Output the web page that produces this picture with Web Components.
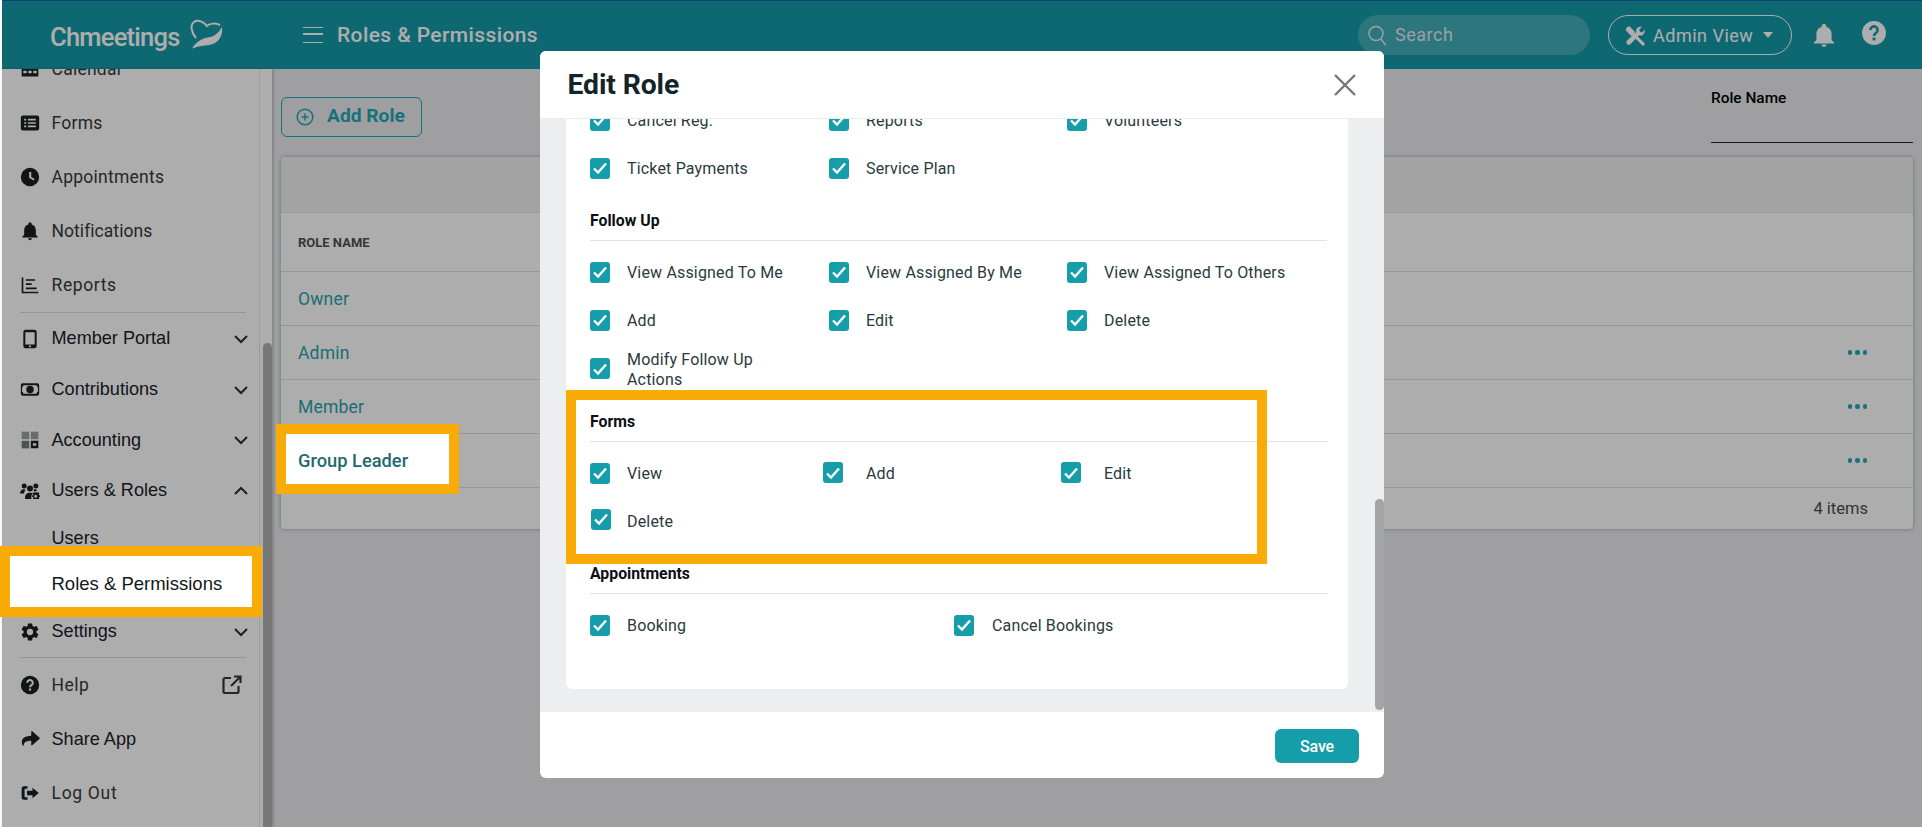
<!DOCTYPE html>
<html lang="en"><head><meta charset="utf-8"><title>Roles &amp; Permissions</title>
<style>
html,body{margin:0;padding:0;height:100%;overflow:hidden;background:#fff;font-family:Roboto,"Liberation Sans",sans-serif}
</style></head>
<body>
<app-page>
  <top-bar slot="top">Roles &amp; Permissions</top-bar>
  <side-nav slot="nav">
    <nav-item h="54" icon="calendar" soft>Calendar</nav-item>
    <nav-item h="54" icon="forms" soft>Forms</nav-item>
    <nav-item h="54" icon="clock" soft>Appointments</nav-item>
    <nav-item h="54" icon="bell" soft style="letter-spacing:.05px">Notifications</nav-item>
    <nav-item h="54" icon="reports" soft style="letter-spacing:.6px">Reports</nav-item>
    <nav-rule></nav-rule>
    <nav-item h="51" icon="mobile" arrow="down">Member Portal</nav-item>
    <nav-item h="51" icon="money" arrow="down">Contributions</nav-item>
    <nav-item h="50" icon="accounting" arrow="down">Accounting</nav-item>
    <nav-item h="51" icon="users" arrow="up">Users &amp; Roles</nav-item>
    <nav-item h="44" sub>Users</nav-item>
    <nav-item h="46" sub></nav-item>
    <nav-item h="51" icon="gear" arrow="down">Settings</nav-item>
    <nav-rule></nav-rule>
    <nav-item h="54" icon="help" ext soft style="letter-spacing:.5px">Help</nav-item>
    <nav-item h="54" icon="share">Share App</nav-item>
    <nav-item h="54" icon="logout" soft style="letter-spacing:.7px">Log Out</nav-item>
  </side-nav>
  <roles-view slot="main">
    <role-row>Owner</role-row>
    <role-row dots>Admin</role-row>
    <role-row dots>Member</role-row>
    <role-row dots></role-row>
  </roles-view>
  <edit-modal slot="modal">
    <perm-group notitle>
      <perm-check>Cancel Reg.</perm-check><perm-check>Reports</perm-check><perm-check>Volunteers</perm-check>
      <perm-check>Ticket Payments</perm-check><perm-check>Service Plan</perm-check>
    </perm-group>
    <perm-group>
      <span slot="title">Follow Up</span>
      <perm-check>View Assigned To Me</perm-check><perm-check>View Assigned By Me</perm-check><perm-check>View Assigned To Others</perm-check>
      <perm-check>Add</perm-check><perm-check>Edit</perm-check><perm-check>Delete</perm-check>
      <perm-check style="height:49px">Modify Follow Up Actions</perm-check>
    </perm-group>
    <perm-group>
      <span slot="title">Forms</span>
      <perm-check>View</perm-check><perm-check style="--nx:-6px;--ny:1px">Add</perm-check><perm-check style="--nx:-6px;--ny:1px">Edit</perm-check>
      <perm-check style="--nx:1px;--ny:4px">Delete</perm-check>
    </perm-group>
    <perm-group cols="364px 1fr">
      <span slot="title">Appointments</span>
      <perm-check>Booking</perm-check><perm-check style="--lg:18px">Cancel Bookings</perm-check>
    </perm-group>
  </edit-modal>
  <call-out slot="marks" style="left:0;top:546px;width:262px;height:71px;padding:4px 0 0 41.5px;font:18.500px 'Liberation Sans',sans-serif;color:#121820" fill>Roles &amp; Permissions</call-out>
  <call-out slot="marks" style="left:276px;top:424px;width:183px;height:70px;padding:3px 0 0 12px;font:500 18.300px Roboto,sans-serif;color:#1f6a70" fill>Group Leader</call-out>
  <call-out slot="marks" style="left:566px;top:390px;width:701px;height:174px"></call-out>
</app-page>
<script>
const ICON = {
  calendar:'<path d="M3 3h18a1 1 0 0 1 1 1v17H2V4a1 1 0 0 1 1-1zM4 9v3h4V9zm6 0v3h4V9zm6 0v3h4V9zM4 14v3h4v-3zm6 0v3h4v-3zm6 0v3h4v-3z" fill-rule="evenodd"/>',
  forms:'<path fill-rule="evenodd" d="M3.500 3h17A2.500 2.500 0 0 1 23 5.500v13a2.500 2.500 0 0 1-2.500 2.500h-17A2.500 2.500 0 0 1 1 18.500v-13A2.500 2.500 0 0 1 3.500 3zM5 7v2h2.500V7zm4.500 0v2H19V7zM5 11v2h2.500v-2zm4.500 0v2H19v-2zM5 15v2h2.500v-2zm4.500 0v2H19v-2z"/>',
  clock:'<path fill-rule="evenodd" d="M12 1a11 11 0 1 1 0 22 11 11 0 0 1 0-22zm-1 5v7l5.500 3.200 1-1.700L13.500 12V6z"/>',
  bell:'<path d="M12 23c1.300 0 2.300-1 2.300-2.200H9.700C9.700 22 10.700 23 12 23zm7-6.500v-5.300c0-3.400-1.900-6.200-5-6.900v-.8C14 2.400 13.100 1.500 12 1.500s-2 .9-2 2v.8c-3.100.7-5 3.500-5 6.900v5.300L2.700 19v.8h18.600V19z"/>',
  reports:'<path d="M2 3h2v17h18v2H2z"/><path d="M7 5h11v2H7zM7 10h7v2H7zM7 15h13v2H7z"/>',
  mobile:'<path fill-rule="evenodd" d="M7 1h10a3 3 0 0 1 3 3v16a3 3 0 0 1-3 3H7a3 3 0 0 1-3-3V4a3 3 0 0 1 3-3zm-.6 3v14.500h11.200V4zM12 19.500a1.300 1.300 0 1 0 0 2.600 1.300 1.300 0 0 0 0-2.600z"/>',
  money:'<path fill-rule="evenodd" d="M3 4.500h18a2.500 2.500 0 0 1 2 2v11a2.500 2.500 0 0 1-2 2H3a2.500 2.500 0 0 1-2-2v-11a2.500 2.500 0 0 1 2-2zm1 2.500c0 1.300-.8 2-1.500 2.200v5.600c.7.200 1.500.9 1.500 2.200h16c0-1.300.8-2 1.500-2.200V9.200C20.800 9 20 8.300 20 7zm8 .5a4.500 4.500 0 1 1 0 9 4.500 4.500 0 0 1 0-9z"/>',
  accounting:'<g opacity=".42"><rect x="2" y="2" width="9" height="9"/><rect x="13" y="2" width="9" height="9"/></g><rect x="2" y="13" width="9" height="9" opacity=".6"/><path fill-rule="evenodd" d="M13 13h9v9h-9zm2.500 3v3h4v-3z"/>',
  users:'<circle cx="5" cy="6" r="3"/><circle cx="19" cy="6" r="3"/><circle cx="12" cy="9" r="3.600"/><path d="M0 15c0-3 2-5 4.500-5 1 0 1.700.3 2.300.8-1.200 1-2 2.500-2 4.200zM6 20c0-3.700 2.500-6 6-6 1.500 0 2.800.4 3.700 1.100-1 .6-1.800 1.400-2 2.900-.4 1-.3 1.900.3 3.500H6zM18 10c1 0 2 .3 2.700 1l-3.600 1.800-.9-2.300c.5-.3 1.100-.5 1.800-.5z"/><path fill-rule="evenodd" d="M19 14.500l.4 1.400 1.200.3 1.200-.6 1 1-.6 1.200.3 1.200 1.400.4v1.300l-1.400.4-.3 1.200.6 1.200H15l.6-1.200-.3-1.200-1.400-.4v-1.300l1.400-.4.3-1.200-.6-1.200 1-1 1.200.6 1.200-.3.4-1.400zm-.6 4a1.800 1.800 0 1 0 0 3.600 1.800 1.800 0 0 0 0-3.600z" transform="translate(.4 -2)"/>',
  gear:'<path d="M19.700 13c.05-.33.07-.66.07-1s-.02-.67-.08-1l2.170-1.700a.52.520 0 0 0 .13-.66l-2.060-3.560a.52.520 0 0 0-.63-.23l-2.560 1.030a7.500 7.500 0 0 0-1.740-1L14.620 2.100a.52.520 0 0 0-.51-.44H9.990a.5.500 0 0 0-.5.440L9.100 4.830c-.63.26-1.210.61-1.740 1L4.800 4.800a.52.520 0 0 0-.63.230L2.100 8.590c-.13.230-.09.500.13.660L4.400 11c-.05.330-.1.680-.1 1s.02.680.08 1l-2.180 1.700a.52.520 0 0 0-.13.660l2.060 3.560c.13.240.4.310.63.230l2.560-1.030c.54.410 1.100.750 1.740 1l.39 2.720c.05.260.26.440.51.440h4.120c.26 0 .47-.18.500-.440l.39-2.720a7.500 7.500 0 0 0 1.740-1l2.560 1.030c.24.090.500 0 .630-.23l2.060-3.560c.13-.23.08-.5-.13-.66zM12 15.800a3.800 3.800 0 1 1 0-7.600 3.800 3.800 0 0 1 0 7.600z"/>',
  help:'<circle cx="12" cy="12" r="11"/><path d="M8.700 9.300a3.300 3.300 0 1 1 5 2.800c-1.100.7-1.700 1.300-1.700 2.600" fill="none" stroke="var(--hole,#fff)" stroke-width="2.400"/><rect x="10.700" y="16.200" width="2.600" height="2.600" fill="var(--hole,#fff)"/>',
  share:'<path d="M13.500 8.200V3.200c0-.6.700-.9 1.200-.5l8.800 7.800c.4.300.4.900 0 1.200l-8.800 7.800c-.5.400-1.200.1-1.200-.5v-4.800c-5.500 0-8.500 1.300-9 5.400-.1.700-1 .8-1.300.2C1.800 16 .5 8.700 13.500 8.200z"/>',
  logout:'<path d="M9 4v3H5.500v10H9v3H5a3 3 0 0 1-3-3V7a3 3 0 0 1 3-3z"/><path d="M15 5.800 22.500 12 15 18.200V14.700H8.500V9.300H15z"/>'
};
const svg = (name, s) => `<svg width="${s}" height="${s}" viewBox="0 0 24 24" fill="currentColor" aria-hidden="true">${ICON[name]||''}</svg>`;
function shadow(el, html){ const r = el.attachShadow({mode:'open'}); r.innerHTML = html; return r; }

customElements.define('app-page', class extends HTMLElement{
  constructor(){super();shadow(this,`<style>
    :host{display:block;position:relative;width:1922px;height:827px;overflow:hidden;background:#fff;padding-left:2px;box-sizing:border-box}
    .wrap{display:flex;flex-direction:column;height:100%}
    .body{flex:1;display:flex;min-height:0;background:#eaebee}
    ::slotted([slot=main]){flex:1;min-width:0}
    .dim{position:absolute;inset:0 0 0 2px;background:rgba(0,0,0,.32)}
  </style>
  <div class="wrap"><slot name="top"></slot><div class="body"><slot name="nav"></slot><slot name="main"></slot></div></div>
  <div class="dim"></div><slot name="modal"></slot><slot name="marks"></slot>`)}
});

customElements.define('top-bar', class extends HTMLElement{
  constructor(){super();shadow(this,`<style>
    :host{display:flex;align-items:center;height:69px;box-sizing:border-box;border-top:1px solid #0b64a0;background:#169aa9;color:#fff;font-family:Roboto,sans-serif;position:relative}
    .brand{width:301px;padding-left:48px;box-sizing:border-box;display:flex;align-items:center;flex:none;font:500 25.500px/1 Roboto,sans-serif;letter-spacing:-.75px;padding-top:5px}
    .brand svg{margin-left:9px;margin-top:-8px;flex:none}
    .menu{flex:none;width:20px;height:16px;margin-right:14px;border-top:1.500px solid #fff;border-bottom:1.500px solid #fff;position:relative;box-sizing:border-box}
    .menu:after{content:"";position:absolute;left:0;right:0;top:5.250px;height:1.500px;background:#fff}
    .title{font-weight:500;font-size:21px;letter-spacing:.4px}
    .right{margin-left:auto;display:flex;align-items:center;padding-right:35px}
    .search{width:232px;height:40px;border-radius:20px;background:rgba(255,255,255,.2);display:flex;align-items:center;padding-left:10px;box-sizing:border-box;font-size:18px;letter-spacing:.5px;color:#dfeef0;margin-top:-1px}
    .search svg{margin-right:8px}
    .admin{margin-left:18px;width:184px;height:40px;border:1px solid #fff;border-radius:20px;box-sizing:border-box;display:flex;align-items:center;padding-left:16px;font-size:18px;letter-spacing:.5px}
    .admin svg{margin-right:7px}
    .caret{width:0;height:0;border:5.500px solid transparent;border-top:6px solid #fff;border-bottom:0;margin-left:10px}
    .bell{margin-left:19px;display:flex}.help{margin-left:24px;display:flex;margin-top:-4px;--hole:#169aa9}
  </style>
  <div class="brand">Chmeetings<svg width="36" height="32" viewBox="10 8 36 32"><path d="M17 28C12 22 11 15 15 12c4-3 10 0 13 4 3-3 9-3 13-1" fill="none" stroke="#fff" stroke-width="2"/><path d="M13 38.500c3-5 7-8.500 13-10.500 4-1 7-1 10-3 3-2 5-5 7-8 1 7-2 13-7 16-6 3-14 2-23 5.500z" fill="#fff"/></svg></div>
  <div class="menu"></div><div class="title"><slot></slot></div>
  <div class="right">
    <div class="search"><svg width="19" height="24" viewBox="0 0 19 24" fill="none" stroke="#dfeef0" stroke-width="1.500"><circle cx="8" cy="10.500" r="7"/><path d="M12.800 16l5 6"/></svg>Search</div>
    <div class="admin"><svg width="21" height="23" viewBox="0 0 24 24" fill="#fff"><path d="M2 2.500l3-1 6.500 6.500-.5 1.500 11 11.200c.8 1 .8 1.800 0 2.500-.8.700-1.600.7-2.400-.2L8.500 12 7 12.500.8 6z"/><path d="M22.500 5.500l-3 3-2.500-.8-.7-2.500 3-3c-2.300-.8-5 0-6 2-.7 1.300-.8 2.500-.3 3.800L3 17c-1.500 1.500-2 3-.8 4.500 1.300 1.500 3 1.300 4.500-.2L16 11.800c1.500.5 3.200.3 4.500-.7 1.700-1.300 2.500-3.500 2-5.600z"/></svg>Admin View<span class="caret"></span></div>
    <div class="bell">${svg('bell',26)}</div>
    <div class="help">${svg('help',26)}</div>
  </div>`)}
});

customElements.define('side-nav', class extends HTMLElement{
  constructor(){super();shadow(this,`<style>
    :host{display:flex;flex:none;width:270px;background:#fff;box-shadow:1px 0 3px rgba(0,0,0,.25);position:relative;overflow:hidden}
    .list{flex:none;width:258px;box-sizing:border-box;border-right:1px solid #e6e6e6;margin-top:-27px}
    .track{flex:none;width:12px;padding-left:3px;box-sizing:border-box}
    .thumb{margin-top:274px;height:600px;width:9px;background:#b2b2b2;border-radius:5px}
  </style><div class="list"><slot></slot></div><div class="track"><div class="thumb"></div></div>`)}
});

customElements.define('nav-rule', class extends HTMLElement{
  constructor(){super();shadow(this,`<style>:host{display:block;height:1px;margin:0 13px 0 18px;background:#dcdcdc}</style>`)}
});

customElements.define('nav-item', class extends HTMLElement{
  connectedCallback(){
    if(this.shadowRoot) return;
    const h=this.getAttribute('h')||54, icon=this.getAttribute('icon'), arrow=this.getAttribute('arrow');
    const chev = arrow ? `<svg class="chev" width="16" height="10" viewBox="0 0 16 10" fill="none" stroke="currentColor" stroke-width="2"><path d="${arrow==='down'?'M2 2l6 6 6-6':'M2 8l6-6 6 6'}"/></svg>` : '';
    const ext = this.hasAttribute('ext') ? `<svg class="ext" width="20" height="20" viewBox="0 0 20 20" fill="none" stroke="currentColor" stroke-width="2.200"><path d="M9 3H3a1.500 1.500 0 0 0-1.500 1.500v12A1.500 1.500 0 0 0 3 18h12a1.500 1.500 0 0 0 1.500-1.500V11M12 1.500h6.500V8M18 2l-9 9"/></svg>` : '';
    shadow(this,`<style>
      :host{display:flex;align-items:center;height:${h}px;color:#1a2128;font:18.100px "Liberation Sans",Arial,sans-serif;box-sizing:border-box;padding-left:18px}
      :host([soft]){color:#37393b;font-family:Roboto,sans-serif;letter-spacing:.25px;font-size:17.500px}
      .ic{width:20px;margin-right:11.500px;display:flex;justify-content:center;flex:none;color:#1a1f22}
      :host([sub]) .ic{visibility:hidden}
      .chev{position:absolute;left:230.500px;color:#2b3035}
      .ext{position:absolute;left:220px;color:#37393b}
      .t{white-space:nowrap}
    </style>
    <span class="ic">${icon?svg(icon,icon==='money'?21:20):''}</span><span class="t"><slot></slot></span>${chev}${ext}`);
  }
});

customElements.define('roles-view', class extends HTMLElement{
  constructor(){super();shadow(this,`<style>
    :host{display:block;box-sizing:border-box;padding:18px 9px 0;font-family:Roboto,sans-serif}
    .tools{display:flex;justify-content:space-between;height:70px}
    .add{margin-top:9.500px;height:40px;width:141px;box-sizing:border-box;border:1px solid #1fa9b6;border-radius:6px;display:flex;align-items:center;padding:0 0 3px 14px;color:#1fa9b6;font-weight:700;font-size:19.200px}
    .add svg{margin:3px 13px 0 0}
    .filter{width:202px;height:56px;border-bottom:1px solid #222;box-sizing:border-box;font-weight:500;font-size:15.400px;color:#000;line-height:22px}
    .card{background:#fff;border-radius:4px;box-shadow:0 0 4px rgba(0,0,0,.3);overflow:hidden}
    .bar{height:56px;background:#f0f0f0;border-bottom:1px solid #e2e2e2;box-sizing:border-box}
    .head{height:59px;display:flex;align-items:center;padding-left:17px;font-weight:700;font-size:13px;color:#505050;border-bottom:1px solid #dedede;box-sizing:border-box}
    .foot{height:41px;display:flex;align-items:center;justify-content:flex-end;padding-right:45px;font-size:16.500px;color:#4c4c4c}
  </style>
  <div class="tools"><div class="add"><svg width="18" height="18" viewBox="0 0 18 18" fill="none" stroke="currentColor" stroke-width="1.500"><circle cx="9" cy="9" r="7.800"/><path d="M9 5.500v7M5.500 9h7"/></svg>Add Role</div><div class="filter">Role Name</div></div>
  <div class="card"><div class="bar"></div><div class="head">ROLE NAME</div><slot></slot><div class="foot">4 items</div></div>`)}
});

customElements.define('role-row', class extends HTMLElement{
  connectedCallback(){
    if(this.shadowRoot) return;
    shadow(this,`<style>
      :host{display:flex;align-items:center;justify-content:space-between;height:54px;padding:0 46px 0 17px;box-sizing:border-box;border-bottom:1px solid #dedede;color:#2aa2ad;font-size:17.500px;letter-spacing:.2px}
      .d{display:flex;gap:3px}.d i{width:4.500px;height:4.500px;border-radius:50%;background:#1fa9b6}
    </style><span><slot></slot></span>${this.hasAttribute('dots')?'<span class="d"><i></i><i></i><i></i></span>':''}`);
  }
});

customElements.define('edit-modal', class extends HTMLElement{
  constructor(){super();shadow(this,`<style>
    :host{position:absolute;left:540px;top:51px;width:844px;height:727px;background:#fff;border-radius:6px;display:flex;flex-direction:column;overflow:hidden;font-family:Roboto,sans-serif}
    header{flex:none;height:68px;display:flex;align-items:center;justify-content:space-between;padding:0 28px 0 27.500px;box-sizing:border-box;border-bottom:1px solid #ececec;position:relative;z-index:1;background:#fff}
    h2{margin:0;font-weight:700;font-size:28.300px;color:#14242b;letter-spacing:-.1px}
    .x{color:#777;display:flex}
    .body{flex:none;height:593px;background:#eceef0;padding:0 36px 0 26px;overflow:hidden;position:relative}
    .sheet{background:#fff;border-radius:0 0 6px 6px;padding:0 21px 35px 24px;margin-top:-23px}
    .thumb{position:absolute;right:0;top:380px;width:9px;height:211px;background:#a2a4a6;border-radius:5px}
    footer{flex:1;display:flex;align-items:center;justify-content:flex-end;padding-right:25px;padding-top:2px}
    button{width:84px;height:34px;border:0;border-radius:6px;background:#169daa;color:#fff;font:500 16px Roboto,sans-serif;letter-spacing:-.2px}
  </style>
  <header><h2>Edit Role</h2><span class="x"><svg width="22" height="22" viewBox="0 0 22 22" fill="none" stroke="currentColor" stroke-width="2.400"><path d="M1 1l20 20M21 1L1 21"/></svg></span></header>
  <div class="body"><div class="sheet"><slot></slot></div><div class="thumb"></div></div>
  <footer><button>Save</button></footer>`)}
});

customElements.define('perm-group', class extends HTMLElement{
  connectedCallback(){
    if(this.shadowRoot) return;
    const cols=this.getAttribute('cols')||'239px 238px 1fr';
    shadow(this,`<style>
      :host{display:block;margin-bottom:5px}
      .t{height:44px;box-sizing:border-box;border-bottom:1px solid #dfe1e3;display:flex;align-items:center;padding-top:3px;font-weight:700;font-size:15.800px;color:#0b0f14;margin-bottom:7px}
      :host([notitle]) .t{display:none}
      .g{display:grid;grid-template-columns:${cols};grid-auto-rows:auto}
    </style><div class="t"><slot name="title"></slot></div><div class="g"><slot></slot></div>`);
  }
});

customElements.define('perm-check', class extends HTMLElement{
  constructor(){super();shadow(this,`<style>
    :host{display:flex;align-items:center;height:48px;font-size:16px;letter-spacing:.17px;color:#2a3a40;line-height:20px}
    .b{flex:none;width:20px;height:21px;border-radius:3px;background:#169daa;margin-left:var(--nx,0);margin-right:calc(var(--lg,17px) - var(--nx,0px));margin-bottom:var(--ny,0);display:flex;align-items:center;justify-content:center}
    .l{max-width:170px;padding-top:2px}
  </style><span class="b"><svg width="16" height="14" viewBox="0 0 16 14" fill="none" stroke="#fff" stroke-width="2.400"><path d="M2 7.500l4 4 8-9"/></svg></span><span class="l"><slot></slot></span>`)}
  connectedCallback(){ const l=this.shadowRoot.querySelector('.l'); if(this.textContent.length<24) l.style.maxWidth='none'; }
});

customElements.define('call-out', class extends HTMLElement{
  constructor(){super();shadow(this,`<style>
    :host{position:absolute;display:flex;align-items:center;box-sizing:border-box;border:10px solid #f9ab08}
    :host([fill]){background:#fff}
  </style><slot></slot>`)}
});
</script>
</body></html>
